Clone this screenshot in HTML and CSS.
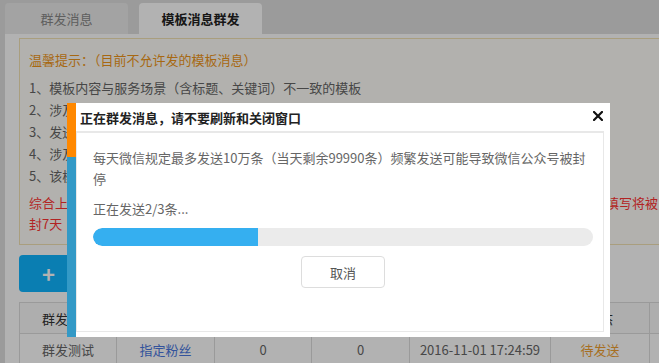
FILE: index.html
```html
<!DOCTYPE html>
<html lang="zh-CN">
<head>
<meta charset="utf-8">
<title>模板消息群发</title>
<link rel="stylesheet" href="styles.css">
</head>
<body>
<div class="page">
  <div class="tabs">
    <div class="tab">群发消息</div>
    <div class="tab active">模板消息群发</div>
  </div>
  <div class="content">
    <div class="notice">
      <div class="notice-title">温馨提示：（目前不允许发的模板消息）</div>
      <ul class="rules">
        <li>1、模板内容与服务场景（含标题、关键词）不一致的模板</li>
        <li>2、涉及违法违规内容的模板</li>
        <li>3、发送营销推广类内容的模板</li>
        <li>4、涉及诱导分享内容的模板</li>
        <li>5、该模板已被微信官方禁用</li>
      </ul>
      <p class="warn">综合上述5点，若发送的模板消息违反以上5条规定被用户投诉或被系统检测到,请管理员务必认真如实填写将被<br>封7天</p>
    </div>
    <button class="btn-add"><span class="plus">+</span> 新建群发</button>
    <table class="list">
      <thead>
        <tr><th>群发名称</th><th>发送对象</th><th>发送成功</th><th>发送失败</th><th>发送时间</th><th>状态</th><th>操作</th></tr>
      </thead>
      <tbody>
        <tr><td>群发测试</td><td class="link">指定粉丝</td><td>0</td><td>0</td><td>2016-11-01 17:24:59</td><td class="pending">待发送</td><td>发送</td></tr>
      </tbody>
    </table>
  </div>
</div>

<div class="overlay"></div>
<div class="dialog">
  <div class="strip"><div class="strip-top"></div><div class="strip-bottom"></div></div>
  <div class="dlg-main">
    <div class="dlg-head">
      <span class="dlg-title">正在群发消息，请不要刷新和关闭窗口</span>
      <svg class="close" width="10" height="10" viewBox="0 0 10 10"><path d="M1 1L9 9M9 1L1 9" stroke="#111" stroke-width="2.2" stroke-linecap="square"/></svg>
    </div>
    <div class="dlg-body">
      <p class="dlg-text">每天微信规定最多发送10万条（当天剩余99990条）频繁发送可能导致微信公众号被封停</p>
      <p class="dlg-status">正在发送2/3条...</p>
      <div class="progress"><div class="progress-fill" style="width:33%"></div></div>
      <div class="dlg-actions"><button class="btn-cancel">取消</button></div>
    </div>
  </div>
</div>
</body>
</html>
```

FILE: styles.css
```css
* { box-sizing: border-box; }
html, body { margin: 0; padding: 0; }
body {
  background: #dfdfdf;
  font-family: "Noto Sans CJK SC", "Noto Sans", sans-serif;
  font-size: 13px;
  color: #666;
  overflow: hidden;
  width: 659px;
  height: 363px;
}
.page {
  width: 780px;
  padding-left: 5px;
}
.tabs {
  display: flex;
  gap: 11px;
  height: 34px;
  padding-top: 3px;
}
.tab {
  width: 123px;
  height: 31px;
  line-height: 31px;
  text-align: center;
  background: #eaeaea;
  color: #888;
  border-radius: 4px 4px 0 0;
}
.tab.active {
  background: #fff;
  color: #222;
  font-weight: bold;
}
.content {
  background: #fff;
  padding: 4px 0 0 14px;
  height: 400px;
}
.notice {
  width: 700px;
  border: 1px solid #f2e3b5;
  background: #fffef9;
  padding: 10px 8px 10px 9px;
}
.notice-title {
  color: #f0961a;
  line-height: 22px;
}
.rules {
  list-style: none;
  margin: 6px 0 0;
  padding: 0;
}
.rules li { line-height: 22px; }
.warn {
  margin: 5px 0 0;
  color: #f33;
  line-height: 21px;
  white-space: nowrap;
}
.btn-add {
  display: flex;
  align-items: center;
  gap: 16px;
  margin-top: 10px;
  height: 37px;
  width: 120px;
  border: 0;
  border-radius: 4px;
  background: #0fb5ff;
  color: #fff;
  font-family: inherit;
  font-size: 13px;
  padding: 0 0 0 23px;
}
.plus { font-size: 22px; font-weight: bold; line-height: 1; margin-top: -2px; }
.list {
  margin-top: 10px;
  border-collapse: collapse;
  table-layout: fixed;
  width: 728px;
}
.list th, .list td {
  border: 1px solid #ddd;
  text-align: center;
  font-weight: normal;
  height: 31px;
  padding: 0;
  white-space: nowrap;
}
.list th { background: #fafafa; color: #333; }
.list th:nth-child(1) { width: 97px; }
.list th:nth-child(2) { width: 98px; }
.list th:nth-child(3) { width: 97px; }
.list th:nth-child(4) { width: 98px; }
.list th:nth-child(5) { width: 141px; }
.list th:nth-child(6) { width: 99px; }
.list td.link { color: #4a78e0; }
.list td.pending { color: #f0a030; }

.overlay {
  position: fixed;
  inset: 0;
  background: rgba(0, 0, 0, 0.3);
}
.dialog {
  position: absolute;
  left: 67px;
  top: 103px;
  width: 543px;
  height: 234px;
  display: flex;
}
.strip {
  width: 9px;
  display: flex;
  flex-direction: column;
}
.strip-top { height: 54px; background: #ff8800; }
.strip-bottom { flex: 1; background: #3399c6; }
.dlg-main {
  flex: 1;
  background: #fff;
  display: flex;
  flex-direction: column;
  padding: 0 6px 5px 0;
}
.dlg-head {
  height: 28px;
  display: flex;
  align-items: center;
  justify-content: space-between;
  padding: 0 1px 0 4px;
}
.dlg-title {
  font-weight: bold;
  color: #222;
  font-size: 13px;
}
.close { margin-top: -2px; }
.dlg-body {
  flex: 1;
  border: 1px solid #e8e8e8;
  border-top-width: 2px;
  padding: 14px 10px 0 16px;
}
.dlg-text {
  margin: 0;
  line-height: 21px;
  width: 500px;
}
.dlg-status {
  margin: 9px 0 0;
  line-height: 21px;
}
.progress {
  margin-top: 9px;
  width: 500px;
  height: 18px;
  border-radius: 9px;
  background: #ebebeb;
  overflow: hidden;
}
.progress-fill {
  height: 100%;
  background: #35aff0;
  border-radius: 9px 0 0 9px;
}
.dlg-actions {
  width: 500px;
  display: flex;
  justify-content: center;
  margin-top: 10px;
}
.btn-cancel {
  width: 84px;
  height: 32px;
  border: 1px solid #ddd;
  border-radius: 4px;
  background: #fff;
  color: #555;
  font-family: inherit;
  font-size: 13px;
}
```
